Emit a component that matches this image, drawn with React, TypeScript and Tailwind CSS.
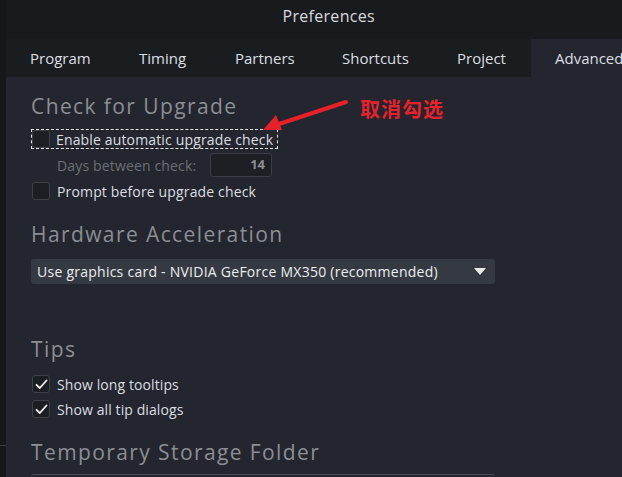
import React from "react";

const tabs = [
  { name: "Program", w: "w-[109px]" },
  { name: "Timing", w: "w-[96px]" },
  { name: "Partners", w: "w-[107px]" },
  { name: "Shortcuts", w: "w-[115px]" },
  { name: "Project", w: "w-[98px]" },
];

function Box({ checked }: { checked?: boolean }) {
  return (
    <div className="w-[18px] h-[18px] shrink-0 rounded-[3px] border border-[#3d4148] bg-[#1b1e22] flex items-center justify-center">
      {checked && (
        <svg width="13" height="11" viewBox="0 0 13 11" fill="none">
          <path d="M1.5 5.8 L4.8 9 L11.5 1.5" stroke="#f2f2f2" strokeWidth="1.8" strokeLinecap="round" strokeLinejoin="round" />
        </svg>
      )}
    </div>
  );
}

function Heading({ children }: { children: React.ReactNode }) {
  return <div className="text-[21px] leading-[30px] tracking-[1.4px] text-[#8b8e94]">{children}</div>;
}

export default function App() {
  return (
    <div className="w-[622px] h-[477px] overflow-hidden flex bg-[#23262e] text-[#dcdee1] font-medium" style={{ fontFamily: "'Open Sans', 'Noto Sans CJK SC', sans-serif" }}>
      <div className="w-[6px] shrink-0 bg-[#15181b]">
        <div className="h-[446px] border-b border-[#3a3d42]" />
      </div>
      <div className="flex-1 flex flex-col relative">
        <div className="h-[39px] shrink-0 bg-[#181b1e] flex justify-center pl-[28px] pt-[5px] text-[16px] leading-[22px] tracking-[0.3px] text-[#d8d9db]">Preferences</div>
        <div className="h-px bg-[#3b3f44]" />
        <div className="h-[38px] shrink-0 bg-[#1a1d20] flex">
          {tabs.map((t) => (
            <div key={t.name} className={`${t.w} shrink-0 pl-6 flex items-center text-[15px] whitespace-nowrap`}>
              {t.name}
            </div>
          ))}
          <div className="flex-1 pl-6 flex items-center text-[15px] bg-[#23262e] whitespace-nowrap">Advanced</div>
        </div>

        <div className="flex-1 pl-[25px] pt-[14px]">
          <Heading>Check for Upgrade</Heading>
          <div className="mt-[8px] h-[20px] w-[247px] flex items-center gap-[6px] border border-dashed border-[#e6e6e6]">
            <Box />
            <span className="text-[14px] tracking-[0.15px]">Enable automatic upgrade check</span>
          </div>
          <div className="mt-[4px] h-[24px] flex items-center pl-[26px]">
            <span className="text-[14px] tracking-[0.15px] text-[#6c6f75] w-[153px]">Days between check:</span>
            <div className="w-[62px] h-[24px] rounded-[3px] border border-[#3a3e44] bg-[#1c1f23] flex items-center justify-end pr-[6px] text-[13px] font-bold text-[#8c8f94]">14</div>
          </div>
          <div className="mt-[4px] h-[20px] flex items-center gap-[7px] pl-px">
            <Box />
            <span className="text-[14px] tracking-[0.15px]">Prompt before upgrade check</span>
          </div>

          <div className="mt-[18px]">
            <Heading>Hardware Acceleration</Heading>
          </div>
          <div className="mt-[10px] w-[464px] h-[25px] rounded-[3px] bg-[#353a42] flex items-center justify-between pl-[6px] pr-[9px]">
            <span className="text-[14px] tracking-[0.25px] text-[#eceef0] whitespace-nowrap">Use graphics card - NVIDIA GeForce MX350 (recommended)</span>
            <svg width="12" height="7" viewBox="0 0 12 7"><path d="M0 0 H12 L6 7 Z" fill="#e8e9eb" /></svg>
          </div>

          <div className="mt-[50px]">
            <Heading>Tips</Heading>
          </div>
          <div className="mt-[10px] h-[20px] flex items-center gap-[7px] pl-px">
            <Box checked />
            <span className="text-[14px] tracking-[0.1px]">Show long tooltips</span>
          </div>
          <div className="mt-[5px] h-[20px] flex items-center gap-[7px] pl-px">
            <Box checked />
            <span className="text-[14px] tracking-[0.1px]">Show all tip dialogs</span>
          </div>

          <div className="mt-[18px]">
            <Heading>Temporary Storage Folder</Heading>
          </div>
          <div className="mt-[7px] w-[464px] h-[10px] rounded-t-[3px] border-t border-[#4a4f57]" />
        </div>

        <svg className="absolute left-[248px] top-[96px]" width="100" height="40" viewBox="0 0 100 40">
          <path d="M92 6 L22 29" stroke="#e8202a" strokeWidth="4" strokeLinecap="round" />
          <path d="M9 34 L22 19 L28 34 Z" fill="#e8202a" />
        </svg>
        <div className="absolute left-[354px] top-[94px] text-[20px] font-bold text-[#e8222b] tracking-[1px]" style={{ fontFamily: "'Noto Sans CJK SC', sans-serif" }}>
          取消勾选
        </div>
      </div>
    </div>
  );
}
